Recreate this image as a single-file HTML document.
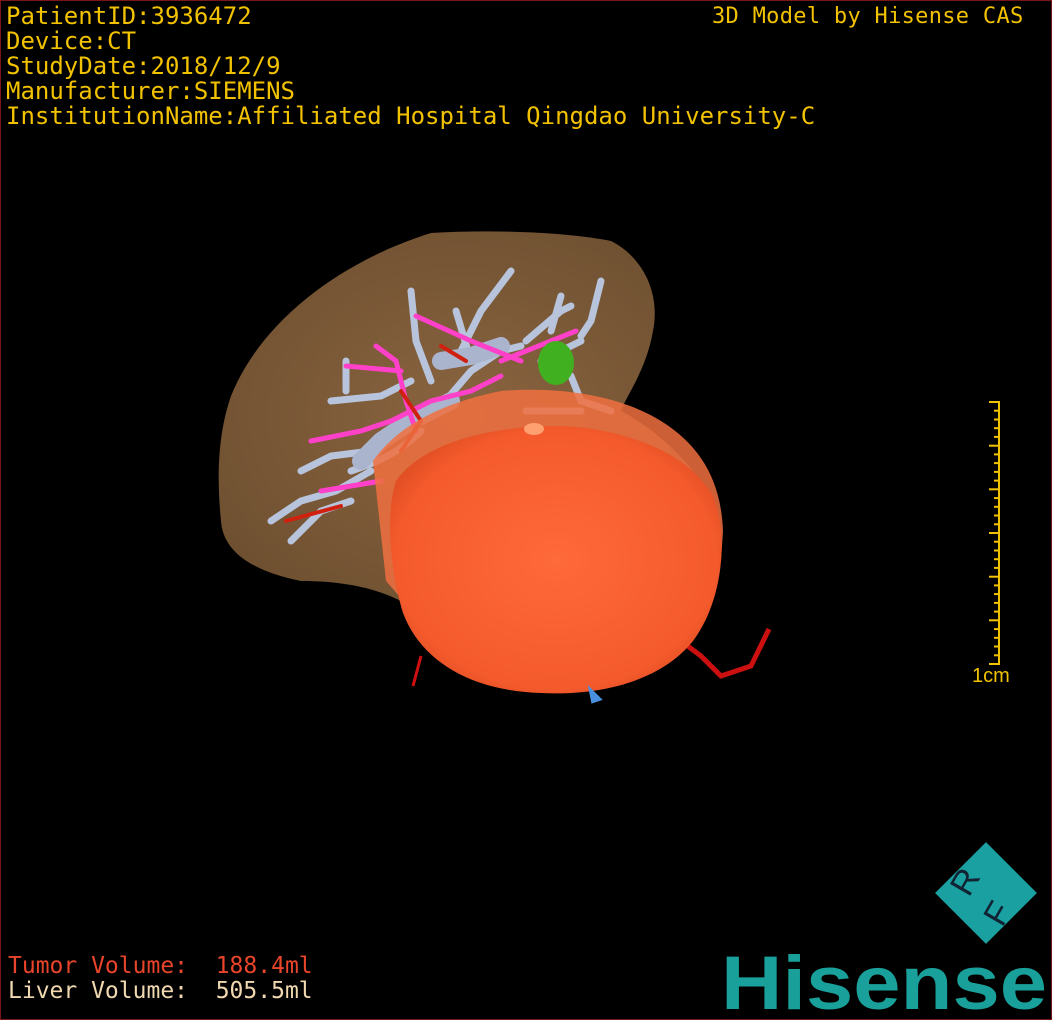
<!DOCTYPE html>
<html><head><meta charset="utf-8"><style>
html,body{margin:0;padding:0;background:#000;}
#f{position:relative;width:1050px;height:1018px;border:1px solid #7a1518;background:#000;overflow:hidden;}
.t{position:absolute;font-family:"DejaVu Sans Mono","Liberation Mono",monospace;white-space:pre;color:#f2c200;font-size:24px;line-height:25px;letter-spacing:0px;}
</style></head><body><div id="f">
<div class="t" style="left:5px;top:3px;">PatientID:3936472
Device:CT
StudyDate:2018/12/9
Manufacturer:SIEMENS
InstitutionName:Affiliated Hospital Qingdao University-C</div>
<div class="t" style="left:711px;top:3px;font-size:22px;letter-spacing:0.3px;">3D Model by Hisense CAS</div>
<div class="t" style="left:7px;top:953px;font-size:23px;color:#e8452a;">Tumor Volume:  188.4ml</div>
<div class="t" style="left:7px;top:978px;font-size:23px;color:#f0d8b0;">Liver Volume:  505.5ml</div>
<svg width="1050" height="1018" style="position:absolute;left:0;top:0">
<defs>
<radialGradient id="tg" cx="0.5" cy="0.5" r="0.6"><stop offset="0" stop-color="#ff6a3a"/><stop offset="0.8" stop-color="#f45a2c"/><stop offset="1" stop-color="#d84a20"/></radialGradient>
<radialGradient id="lg" cx="0.5" cy="0.5" r="0.6"><stop offset="0" stop-color="#8a6440"/><stop offset="1" stop-color="#6e5030"/></radialGradient>
</defs>
<path d="M230,395 C260,320 340,260 430,232 C500,228 570,232 610,240 C640,255 660,290 652,330 C645,370 625,395 620,410 C650,425 690,460 705,490 L690,560 L560,600 L400,600 C380,590 350,580 300,580 C250,570 222,550 220,520 C215,470 218,430 230,395Z" fill="url(#lg)"/>
<g fill="none" stroke-linecap="round">
<g stroke="#b8c4dc" stroke-width="7">
<path d="M300,470 L330,455 L370,450 L410,420 L440,405 L470,370 L500,350 L520,345"/>
<path d="M350,470 C380,460 400,450 420,430"/>
<path d="M330,400 L380,395 L410,380"/>
<path d="M270,520 L300,500 L335,490 L370,470"/>
<path d="M290,540 L320,510 L350,500"/>
<path d="M345,360 L345,390"/>
<path d="M410,290 L415,340 L430,380"/>
<path d="M510,270 L480,310 L460,350"/>
<path d="M455,310 L470,360"/>
<path d="M600,280 L590,320 L580,335"/>
<path d="M560,295 L550,330"/>
<path d="M525,340 L560,310 L570,305"/>
<path d="M540,360 L580,340"/>
<path d="M570,375 L580,400 L610,410"/>
<path d="M525,410 L580,410"/>
</g>
<g stroke="#aab4cc" stroke-width="18"><path d="M360,460 L380,440 L410,420 L450,400"/><path d="M440,360 L470,355 L500,345"/></g>
<g stroke="#ff40c8" stroke-width="5">
<path d="M310,440 L360,430 L390,420 L430,400 L470,390 L500,375"/>
<path d="M375,345 L395,360 L405,400 L415,430"/>
<path d="M345,365 L400,370"/>
<path d="M415,315 L470,340 L520,360"/>
<path d="M500,360 L550,340 L575,330"/>
<path d="M320,490 L380,480"/>
</g>
<g stroke="#d02010" stroke-width="4">
<path d="M285,520 L340,505"/><path d="M400,390 L420,420 L400,450"/><path d="M440,345 L465,360"/>
</g>
</g>
<ellipse cx="555" cy="362" rx="18" ry="22" fill="#40b020"/>
<path d="M372,460 C400,420 450,400 500,390 C560,385 620,395 660,420 C700,445 720,480 722,530 L720,560 L690,600 L600,620 L420,620 L385,580 Z" fill="#f07040" opacity="0.85"/>
<path d="M420,655 L412,685" stroke="#d01010" stroke-width="3"/>
<path d="M640,665 L680,640 L700,655 L720,675 L750,665 L768,628" stroke="#cc1010" stroke-width="5" fill="none"/>
<path d="M395,480 C420,445 480,425 560,425 C630,428 690,455 712,495 C728,535 722,600 692,640 C660,680 600,695 540,692 C470,690 420,660 402,612 C388,565 385,510 395,480Z" fill="url(#tg)"/>
<ellipse cx="533" cy="428" rx="10" ry="6" fill="#ffa070"/>
<path d="M590,690 L598,698 L592,700 Z" fill="#4a90e0" stroke="#4a90e0" stroke-width="4"/>
<g stroke="#f2c200" stroke-width="2">
<line x1="998" y1="401" x2="998" y2="663"/>
<line x1="988" y1="401" x2="999" y2="401"/><line x1="988" y1="663" x2="999" y2="663"/>
</g>
<g stroke="#f2c200" stroke-width="2" id="ticks"></g>
<text x="971" y="681" font-family="Liberation Sans,sans-serif" font-size="20" fill="#f2c200">1cm</text>
<g transform="translate(985,892) rotate(45)"><rect x="-36" y="-36" width="72" height="72" fill="#1aa0a0"/></g>
<text x="950" y="890" font-family="Liberation Sans,sans-serif" font-size="34" fill="#123" transform="rotate(-60 965 878)">R</text>
<text x="985" y="925" font-family="Liberation Sans,sans-serif" font-size="34" fill="#123" transform="rotate(-60 995 912)">F</text>
<text x="720" y="1008" font-family="Liberation Sans,sans-serif" font-size="76" font-weight="bold" fill="#1aa09a" textLength="326" lengthAdjust="spacingAndGlyphs">Hisense</text>
</svg>
<script>
var g=document.getElementById('ticks'),s='';
for(var i=1;i<30;i++){var y=401+i*262/30;var x1=(i%5==0)?988:993;s+='<line x1="'+x1+'" y1="'+y.toFixed(1)+'" x2="998" y2="'+y.toFixed(1)+'"/>';}
g.innerHTML=s;
</script>
</div></body></html>
